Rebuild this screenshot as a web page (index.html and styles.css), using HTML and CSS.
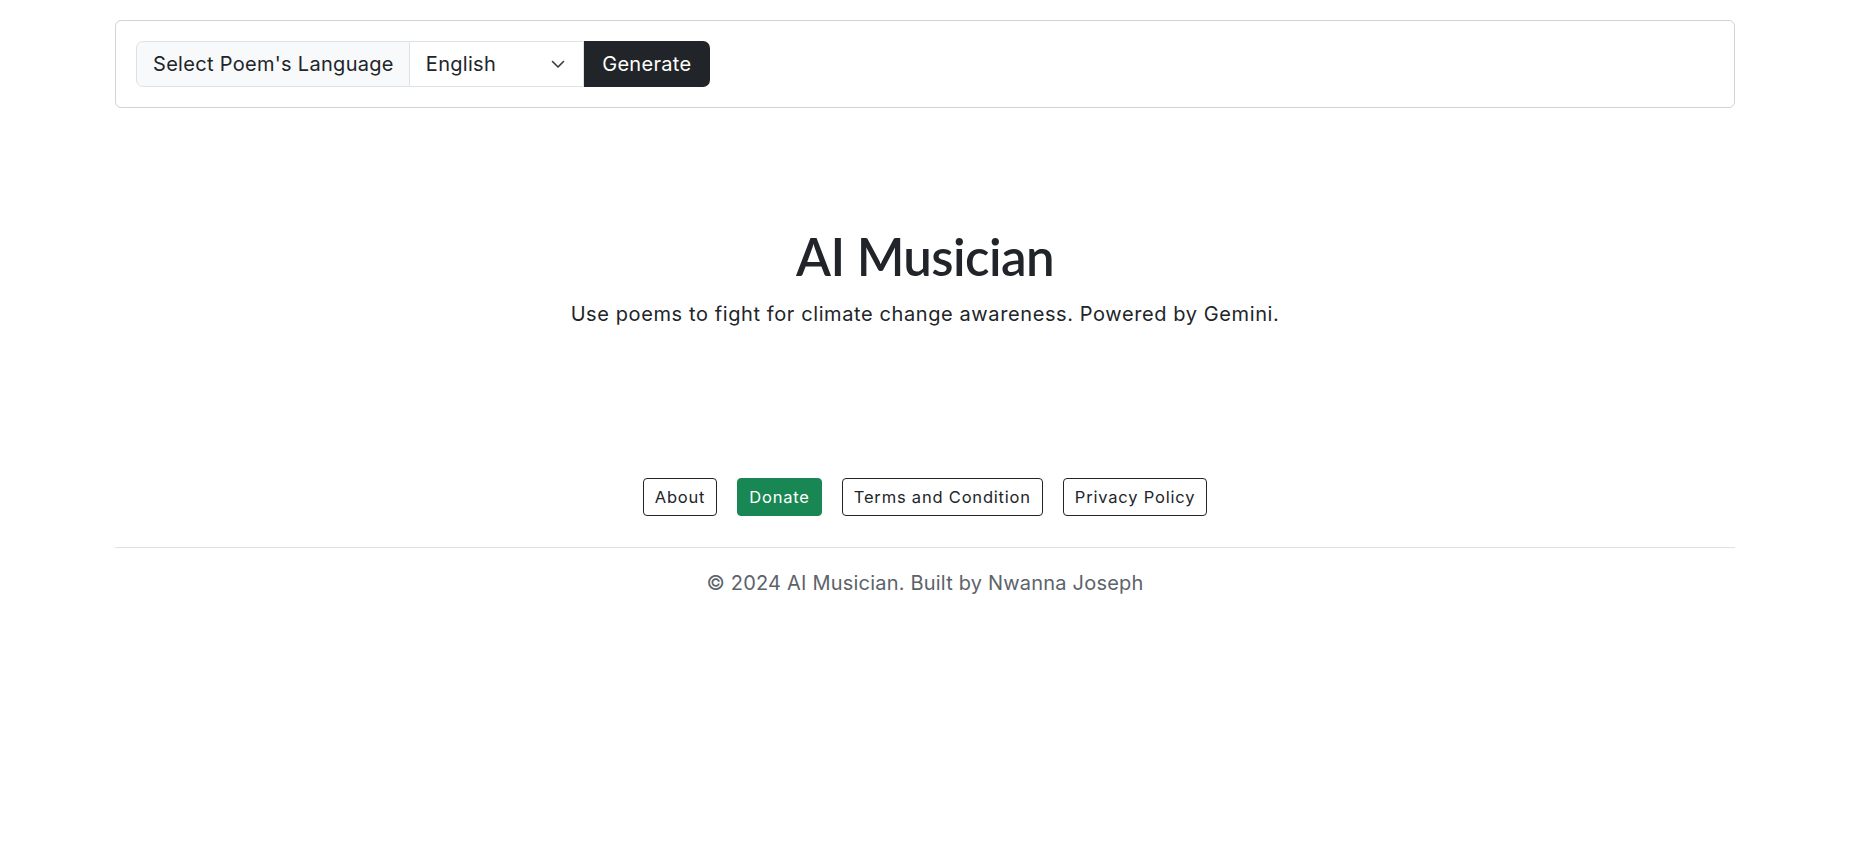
FILE: index.html
```html
<!DOCTYPE html>
<html lang="en">
<head>
<meta charset="utf-8">
<title>AI Musician</title>
<link rel="stylesheet" href="styles.css">
</head>
<body>
<div class="page">
  <div class="container">
    <div class="card">
      <div class="input-group">
        <span class="group-label">Select Poem's Language</span>
        <div class="select">
          <span class="select-value">English</span>
          <svg class="chevron" width="14" height="9" viewBox="0 0 14 9"><path d="M1.5 1.5l5.5 5.5 5.5-5.5" fill="none" stroke="#343a40" stroke-width="1.6" stroke-linecap="round" stroke-linejoin="round"/></svg>
        </div>
        <button class="btn-generate">Generate</button>
      </div>
    </div>

    <div class="hero">
      <h1 class="title">AI Musician</h1>
      <p class="lead">Use poems to fight for climate change awareness. Powered by Gemini.</p>
    </div>

    <footer class="footer">
      <nav class="footer-links">
        <a class="btn-outline">About</a>
        <a class="btn-success">Donate</a>
        <a class="btn-outline">Terms and Condition</a>
        <a class="btn-outline">Privacy Policy</a>
      </nav>
      <hr class="divider">
      <p class="copyright">© 2024 AI Musician. Built by Nwanna Joseph</p>
    </footer>
  </div>
</div>
</body>
</html>
```

FILE: styles.css
```css
html, body {
  margin: 0;
  padding: 0;
  background: #ffffff;
}

body {
  font-family: "Inter", "Open Sans", sans-serif;
  color: #212529;
}

.page {
  width: 1850px;
}

.container {
  width: 1620px;
  margin: 0 auto;
}

.card {
  margin-top: 20px;
  border: 1px solid #d3d3d4;
  border-radius: 6px;
  padding: 20px;
}

.input-group {
  display: flex;
  height: 46px;
}

.group-label {
  display: flex;
  align-items: center;
  padding: 0 15px 0 16px;
  background: #f8f9fa;
  border: 1px solid #dee2e6;
  border-radius: 7px 0 0 7px;
  font-size: 20px;
  letter-spacing: 0.3px;
  white-space: nowrap;
}

.select {
  display: flex;
  align-items: center;
  justify-content: space-between;
  width: 174px;
  box-sizing: border-box;
  padding: 0 18px 0 16px;
  border: 1px solid #dee2e6;
  border-left: none;
  font-size: 20px;
  letter-spacing: 0.3px;
}

.chevron {
  display: block;
}

.btn-generate {
  width: 126px;
  border: none;
  background: #212529;
  color: #ffffff;
  font-family: inherit;
  font-size: 20px;
  letter-spacing: 0.3px;
  border-radius: 0 7px 7px 0;
  padding: 0;
}

.hero {
  text-align: center;
  padding-top: 118px;
}

.title {
  margin: 0;
  font-family: "Lato", sans-serif;
  font-weight: 600;
  font-size: 51px;
  line-height: 1.2;
  letter-spacing: -0.6px;
}

.lead {
  margin: 12px 0 0;
  font-size: 20px;
  letter-spacing: 0.6px;
  line-height: 1.5;
}

.footer {
  padding-top: 149px;
}

.footer-links {
  display: flex;
  justify-content: center;
  gap: 20px;
}

.btn-outline,
.btn-success {
  display: block;
  padding: 6px 11px;
  font-size: 16.5px;
  letter-spacing: 0.8px;
  line-height: 24px;
  border-radius: 4px;
  border: 1px solid #212529;
  color: #212529;
}

.btn-success {
  background: #198754;
  border-color: #198754;
  color: #ffffff;
}

.divider {
  margin: 31px 0 0;
  border: none;
  border-top: 1px solid #dee2e6;
}

.copyright {
  margin: 20px 0 0;
  text-align: center;
  font-size: 20px;
  letter-spacing: 0.2px;
  line-height: 1.5;
  color: #5c636a;
}
```
